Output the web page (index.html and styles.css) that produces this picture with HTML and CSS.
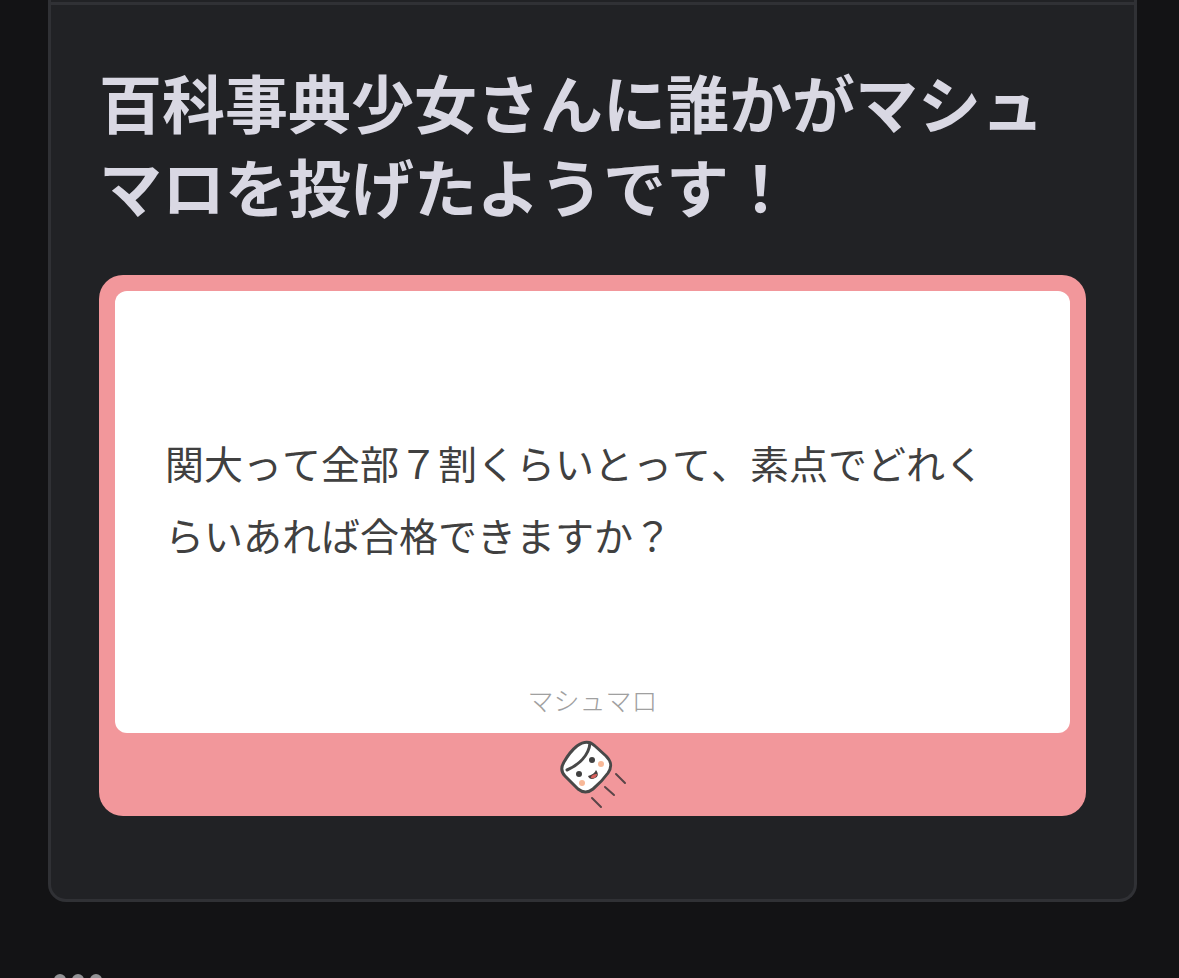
FILE: index.html
```
<!DOCTYPE html>
<html lang="ja">

<head>
    <meta charset="UTF-8">
    <meta name="viewport" content="width=device-width, initial-scale=1.0">
    <title>マシュマロ</title>
    <link rel="stylesheet" href="styles.css">
</head>

<body>
    <main>
        <article class="card">
            <div class="card-body">
                <h1>百科事典少女さんに誰かがマシュマロを投げたようです！</h1>
                <section class="message">
                    <div class="message-paper">
                        <p class="message-text">関大って全部７割くらいとって、素点でどれくらいあれば合格できますか？</p>
                        <p class="brand">マシュマロ</p>
                    </div>
                    <!-- flying marshmallow -->
                    <svg class="mascot" viewBox="0 0 72 72" aria-hidden="true">
                        <path class="outline body" d="M20 8 C27 3 33 3 38 8 L49 18 C55 24 55 29 51 35 C46 42 42 46 36 51 C31 55 26 55 21 51 L8 38 C4 34 4 29 7 24 C11 17 15 12 20 8 Z" />
                        <path class="outline band" d="M33 5 C32 17 22 27 10 32" />
                        <circle class="eye" cx="35" cy="22" r="3" />
                        <circle class="eye" cx="22" cy="36" r="3" />
                        <circle class="cheek" cx="44" cy="26" r="3" />
                        <circle class="cheek" cx="25" cy="45" r="3" />
                        <path class="mouth" d="M31 38 C35 37 38 35 39 32 C42 36 41 39 38 40 C35 42 32 41 31 38 Z" />
                        <path class="tongue" d="M34 40 C34 37 37 36 40 36 C40 39 37 41 34 40 Z" />
                        <path class="trail" d="M59 36 L68 45 M48 49 L57 57 M35 60 L44 69" />
                    </svg>
                </section>
            </div>
        </article>
        <button class="more" type="button" aria-label="メニュー">
            <span></span>
            <span></span>
            <span></span>
        </button>
    </main>
</body>

</html>
```
FILE: styles.css
```
* {
    box-sizing: border-box;
}

body {
    font-family: "Noto Sans CJK JP", sans-serif;
    font-kerning: none;
    margin: 0;
    height: 100vh;
    overflow: hidden;
    background-color: #131315;
}

main {
    padding: 0 42px 0 48px;
}

.card {
    padding-top: 2px;
    background-color: #212225;
    border: 3px solid #303135;
    border-top: none;
    border-radius: 0 0 18px 18px;
}

.card-body {
    padding: 54px 48px 83px;
    border-top: 3px solid #303135;
}

h1 {
    margin: 0 0 48px;
    font-size: 63px;
    font-weight: bold;
    line-height: 84px;
    color: #d9d8e3;
}

.message {
    padding: 16px 16px 6px;
    background-color: #f2979b;
    border-radius: 24px;
}

.message-paper {
    padding: 135px 50px 14px;
    background-color: #fff;
    border-radius: 12px;
}

.message-text {
    margin: 0;
    font-size: 39px;
    line-height: 72px;
    color: #404040;
}

.brand {
    margin: 111px 0 0;
    font-size: 26px;
    font-weight: 300;
    line-height: 38px;
    text-align: center;
    color: #a0a0a0;
}

.mascot {
    display: block;
    width: 72px;
    height: 72px;
    margin: 5px auto 0;
}

.outline {
    fill: none;
    stroke: #484848;
    stroke-width: 3;
    stroke-linecap: round;
    stroke-linejoin: round;
}

.body {
    fill: #fff;
}

.eye {
    fill: #404040;
}

.cheek {
    fill: #f8b897;
}

.mouth {
    fill: #484040;
}

.tongue {
    fill: #d9605c;
}

.trail {
    stroke: #5a4548;
    stroke-width: 2;
    stroke-linecap: round;
}

.more {
    display: flex;
    gap: 6px;
    margin-top: 72px;
    padding: 0 6px;
    background: none;
    border: none;
}

.more span {
    width: 12px;
    height: 12px;
    background-color: #929295;
    border-radius: 50%;
}
```
